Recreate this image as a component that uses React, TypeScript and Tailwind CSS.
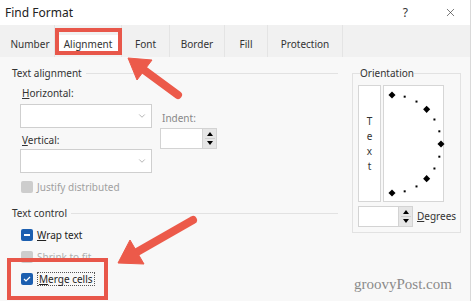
import React from 'react';
import { X, ChevronDown } from 'lucide-react';

const tabs = [
  { label: 'Number', w: 'w-[49px]' },
  { label: 'Alignment', w: 'w-[67px]' },
  { label: 'Font', w: 'w-[48px]' },
  { label: 'Border', w: 'w-[55px]' },
  { label: 'Fill', w: 'w-[43px]' },
  { label: 'Protection', w: 'w-[75px]' },
];

const SelectBox: React.FC = () => (
  <div className="h-[24px] w-[132px] bg-white border border-[#cfcfcf] flex items-center justify-end pr-[4px]">
    <ChevronDown size={10} strokeWidth={1.5} className="text-[#888]" />
  </div>
);

const Spinner: React.FC<{ w: string; h: string }> = ({ w, h }) => (
  <div className={`${w} ${h} bg-white border border-[#d3d3d3] flex`}>
    <div className="flex-1" />
    <div className="w-[14px] bg-[#e6e6e6] border-l border-[#d3d3d3] flex flex-col items-center justify-center gap-[2px]">
      <div className="w-0 h-0 border-l-[3px] border-r-[3px] border-b-[4px] border-l-transparent border-r-transparent border-b-black" />
      <div className="w-[10px] h-px bg-[#cfcfcf]" />
      <div className="w-0 h-0 border-l-[3px] border-r-[3px] border-t-[4px] border-l-transparent border-r-transparent border-t-black" />
    </div>
  </div>
);

const GroupHeader: React.FC<{ text: string }> = ({ text }) => (
  <div className="h-[14px] flex items-center pl-[12px] pr-[2px]">
    <span className="text-[#333]">{text}</span>
    <div className="flex-1 h-px bg-[#e2e2e2] ml-[4px]" />
  </div>
);

// orientation dial dots, centre (391,144) radius 49 in page coords
const dial = Array.from({ length: 13 }, (_, i) => {
  const deg = 90 - i * 15;
  const rad = (deg * Math.PI) / 180;
  return { x: 8 + 49 * Math.cos(rad), y: 58 - 49 * Math.sin(rad), big: i % 3 === 0 };
});

const App: React.FC = () => {
  return (
    <div className="relative w-[474px] h-[301px] overflow-hidden bg-white text-[10px] text-[#333]" style={{ fontFamily: '"Noto Sans", "Open Sans", sans-serif' }}>
      <div className="w-[471px] h-full flex flex-col border-r border-[#d9d9d9]">
        {/* title bar */}
        <div className="h-[25px] flex items-center pl-[5px] pr-[13px] bg-white">
          <span className="text-[12px] text-[#222]">Find Format</span>
          <span className="ml-auto text-[12px] text-[#333] mr-[36px]">?</span>
          <X size={13} strokeWidth={1.2} className="text-[#333]" />
        </div>

        {/* tabs */}
        <div className="h-[32px] bg-[#f1f1f1] flex pl-[6px]">
          {tabs.map((t) => (
            <div key={t.label} className={`${t.w} h-full flex items-center justify-center pt-[6px] border-r border-[#e4e4e4]`}>
              {t.label === 'Alignment' ? (
                <span className="w-[59px] h-[19px] bg-white flex items-center justify-center">{t.label}</span>
              ) : (
                <span>{t.label}</span>
              )}
            </div>
          ))}
        </div>

        {/* content */}
        <div className="flex-1 bg-[#f8f8f8] flex">
          <div className="w-[340px] pt-[9px]">
            <GroupHeader text="Text alignment" />
            <div className="flex pl-[20px]">
              <div className="flex flex-col">
                <div className="mt-[6px] h-[14px] leading-[14px] pl-[2px]"><u>H</u>orizontal:</div>
                <div className="mt-[4px]"><SelectBox /></div>
                <div className="mt-[5px] h-[14px] leading-[14px] pl-[2px]"><u>V</u>ertical:</div>
                <div className="mt-[2px]"><SelectBox /></div>
                <div className="mt-[8px] h-[12px] flex items-center pl-[1px]">
                  <div className="w-[12px] h-[12px] rounded-[2px] bg-[#cdcdcd]" />
                  <span className="ml-[4px] text-[#a0a0a0]">Justify distributed</span>
                </div>
              </div>
              <div className="flex flex-col ml-[8px]">
                <div className="mt-[31px] h-[14px] leading-[14px] pl-[2px] text-[#888]">Indent:</div>
                <div className="mt-[3px]"><Spinner w="w-[57px]" h="h-[21px]" /></div>
              </div>
            </div>

            <div className="mt-[13px]"><GroupHeader text="Text control" /></div>
            <div className="pl-[21px] flex flex-col">
              <div className="mt-[8px] h-[14px] flex items-center">
                <div className="w-[12px] h-[12px] rounded-[2px] bg-[#1c5fb0] flex items-center justify-center">
                  <div className="w-[6px] h-[1.5px] bg-white" />
                </div>
                <span className="ml-[4px] text-[#222]"><u>W</u>rap text</span>
              </div>
              <div className="mt-[8px] h-[14px] flex items-center">
                <div className="w-[12px] h-[12px] rounded-[2px] bg-[#cdcdcd]" />
                <span className="ml-[4px] text-[#b0b0b0]">Shrink to fit</span>
              </div>
              <div className="mt-[8px] h-[14px] flex items-center">
                <div className="w-[12px] h-[12px] rounded-[2px] bg-[#1c5fb0] flex items-center justify-center">
                  <svg width="8" height="6" viewBox="0 0 8 6"><path d="M1 3 L3 5 L7 1" fill="none" stroke="white" strokeWidth="1.2" /></svg>
                </div>
                <span className="ml-[4px] text-[#222] border border-dotted border-[#555] px-[1px] leading-[12px]"><u>M</u>erge cells</span>
              </div>
            </div>
          </div>

          <div className="flex flex-col pl-[12px] pt-[9px]">
            <fieldset className="w-[109px] h-[167px] border border-[#e2e2e2] pl-[5px] pt-[5px]">
              <legend className="ml-[2px] h-[14px] leading-[14px] text-[#333]">Orientation</legend>
              <div className="flex gap-[2px]">
                <div className="w-[23px] h-[117px] bg-white border border-[#d6d6d6] flex flex-col items-center justify-center gap-[1px] leading-[14px] text-[#333]">
                  <span>T</span><span>e</span><span>x</span><span>t</span>
                </div>
                <div className="w-[61px] h-[117px] bg-white border border-[#d6d6d6]">
                  <svg width="61" height="117">
                    {dial.map((d, i) =>
                      d.big ? (
                        <rect key={i} x={d.x - 2.5} y={d.y - 2.5} width="5" height="5" fill="black" transform={`rotate(45 ${d.x} ${d.y})`} />
                      ) : (
                        <rect key={i} x={d.x - 1} y={d.y - 1} width="2" height="2" fill="black" />
                      )
                    )}
                  </svg>
                </div>
              </div>
              <div className="mt-[4px] flex items-center">
                <Spinner w="w-[55px]" h="h-[21px]" />
                <span className="ml-[4px]"><u>D</u>egrees</span>
              </div>
            </fieldset>
            <div className="mt-auto mb-[6px] ml-[2px] text-[15px] text-[#8a8a8a]" style={{ fontFamily: '"Liberation Serif", serif' }}>groovyPost.com</div>
          </div>
        </div>
      </div>

      {/* callout boxes and arrows */}
      <div className="absolute left-[55px] top-[28px] w-[67px] h-[27px] border-[4px] border-[#e8574a]" />
      <div className="absolute left-[7px] top-[258px] w-[101px] h-[42px] border-[4px] border-[#e8574a]" />
      <svg className="absolute inset-0 pointer-events-none" width="474" height="301">
        <g fill="#ec5a4a" stroke="#ec5a4a">
          <line x1="178" y1="95" x2="144" y2="70" strokeWidth="8" strokeLinecap="round" />
          <polygon points="128,58 152,60 137,80" strokeWidth="1" strokeLinejoin="round" />
          <line x1="193" y1="220" x2="137" y2="252" strokeWidth="8" strokeLinecap="round" />
          <polygon points="118,263 130,240 144,264" strokeWidth="1" strokeLinejoin="round" />
        </g>
      </svg>
    </div>
  );
};

export default App;
